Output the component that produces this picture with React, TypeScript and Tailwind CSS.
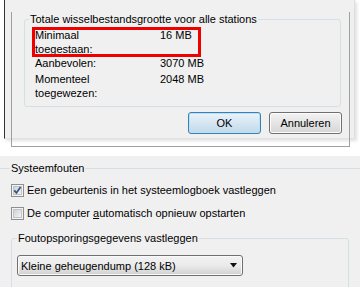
import React from 'react';

const CheckBox = ({ id, checked }: { id: string; checked?: boolean }) => (
  <svg width="13" height="13" viewBox="0 0 13 13" className="shrink-0">
    <defs>
      <linearGradient id={id} x1="0" y1="0" x2="1" y2="1">
        <stop offset="0" stopColor="#cbcfd5" />
        <stop offset="1" stopColor="#f6f6f6" />
      </linearGradient>
    </defs>
    <rect x="0.5" y="0.5" width="12" height="12" fill="#f4f4f4" stroke="#8e8f8f" />
    <rect x="2.5" y="2.5" width="8" height="8" fill={`url(#${id})`} stroke="#c0c4c8" />
    {checked && (
      <path d="M3.3 6.4 L5.4 8.9 L9.6 2.9" stroke="#38527e" strokeWidth="1.7" fill="none" />
    )}
  </svg>
);

const Button = ({ label, primary }: { label: string; primary?: boolean }) => (
  <button
    className={
      primary
        ? 'w-[73px] h-[22px] rounded-[3px] border border-[#3c7fb1] bg-gradient-to-b from-[#eaf3fa] to-[#c2d9ea] shadow-[inset_0_0_0_1px_#b6e1f7] text-[11px] leading-none text-black'
        : 'w-[73px] h-[22px] rounded-[3px] border border-[#707070] bg-gradient-to-b from-[#f3f3f3] to-[#d6d6d6] shadow-[inset_0_0_0_1px_#fcfcfc] text-[11px] leading-none text-black'
    }
  >
    {label}
  </button>
);

export default function App() {
  return (
    <div className="relative w-[360px] h-[300px] bg-white overflow-hidden flex flex-col font-['Liberation_Sans',Arial,sans-serif] text-[11px] leading-[14px] text-black">
      {/* page-file dialog (top part) */}
      <div className="shrink-0 ml-[4px] w-[351px] h-[139px] bg-[#f0f0f0] border-l border-l-[#333333] border-r border-r-[#dedede] border-b border-b-[#e2e2e2] shadow-[2px_2px_3px_rgba(0,0,0,0.12)]">
        <div className="ml-[6px] w-[339px] h-[135px] border-x border-b border-[#a0a0a0]">
          <fieldset className="ml-[12px] mt-[12px] w-[317px] h-[95px] border border-[#d5dfe5] rounded-[3px]">
            <legend className="ml-[4px] px-[1px]">Totale wisselbestandsgrootte voor alle stations</legend>
            <div className="mt-[2px] pl-[10px] grid grid-cols-[125px_1fr]">
              <div>Minimaal<br />toegestaan:</div>
              <div>16 MB</div>
              <div>Aanbevolen:</div>
              <div>3070 MB</div>
              <div className="mt-[2px]">Momenteel<br />toegewezen:</div>
              <div className="mt-[2px]">2048 MB</div>
            </div>
          </fieldset>
          <div className="mt-[5px] pr-[7px] flex justify-end gap-[8px]">
            <Button label="OK" primary />
            <Button label="Annuleren" />
          </div>
        </div>
      </div>

      {/* red annotation */}
      <div className="absolute left-[32px] top-[27px] w-[169px] h-[30px] border-[3px] border-[#ee0000] pointer-events-none" />

      {/* startup and recovery (bottom part) */}
      <div className="shrink-0 mt-[17px] h-[131px] bg-[#f0f0f0] overflow-hidden pt-[5px]">
        <div className="h-[14px] flex items-center">
          <div className="w-[10px] border-t border-[#d5dfe5]" />
          <span className="px-[1px]">Systeemfouten</span>
          <div className="flex-1 border-t border-[#d5dfe5]" />
        </div>
        <div className="mt-[8px] ml-[11px] h-[14px] flex items-center">
          <CheckBox id="cb1" checked />
          <span className="ml-[3px]">
            Een <span className="underline">g</span>ebeurtenis in het systeemlogboek vastleggen
          </span>
        </div>
        <div className="mt-[9px] ml-[11px] h-[14px] flex items-center">
          <CheckBox id="cb2" />
          <span className="ml-[3px]">
            De computer <span className="underline">a</span>utomatisch opnieuw opstarten
          </span>
        </div>
        <fieldset className="mt-[11px] ml-[11px] w-[338px] h-[80px] border border-[#d5dfe5] rounded-[3px]">
          <legend className="ml-[5px] px-[1px]">Foutopsporingsgegevens vastleggen</legend>
          <div className="mt-[10px] ml-[5px] w-[226px] h-[21px] rounded-[3px] border border-[#707070] bg-gradient-to-b from-[#f2f2f2] via-[#ebebeb] to-[#d0d0d0] shadow-[inset_0_0_0_1px_#fafafa] flex items-center pl-[3px] pr-[5px]">
            <span className="flex-1">Kleine geheugendump (128 kB)</span>
            <svg width="7" height="5" viewBox="0 0 7 5">
              <path d="M0 0 H7 L3.5 4.5 Z" fill="#111111" />
            </svg>
          </div>
        </fieldset>
      </div>
    </div>
  );
}
